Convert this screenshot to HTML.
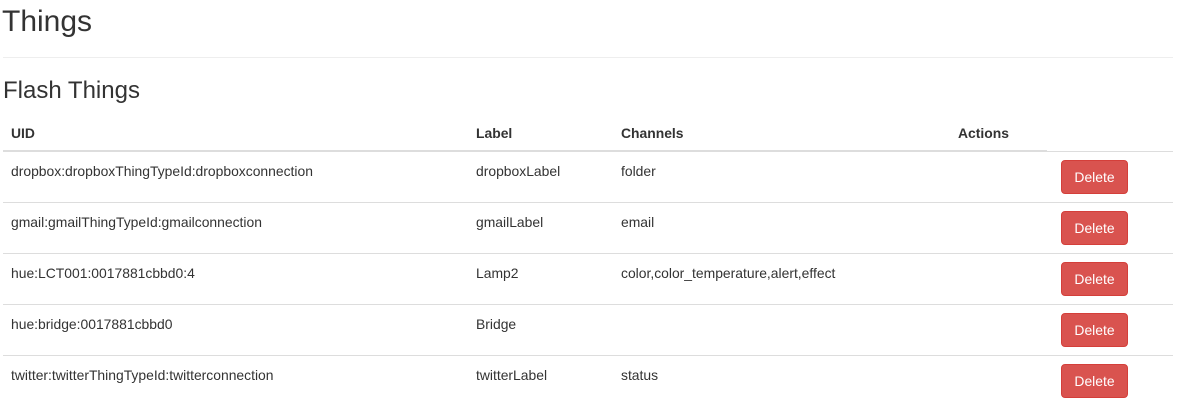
<!DOCTYPE html>
<html><head><style>
body{margin:0;font-family:"Liberation Sans",Arial,sans-serif;color:#333;background:#fff;width:1177px;height:411px;overflow:hidden;position:relative}
h1{position:absolute;left:2px;top:4px;margin:0;font-size:30px;font-weight:400;line-height:36px}
.hr{position:absolute;left:3px;width:1170px;top:57px;height:1px;background:#eee}
h3{position:absolute;left:3px;top:77px;margin:0;font-size:24px;font-weight:400;line-height:28px}
table{position:absolute;left:3px;top:115px;border-collapse:collapse;font-size:13.9px;width:1170px}
th{text-align:left;font-weight:bold;padding:0 8px;height:35px;border-bottom:2px solid #ddd;vertical-align:middle}
td{padding:0 8px;border-top:1px solid #ddd;vertical-align:top;line-height:18px;box-sizing:border-box;height:51px}
td.t{padding-top:10px}
td.b{padding:8px 0 0 14px}
.btn{display:inline-block;width:67px;height:34px;box-sizing:border-box;background:#d9534f;border:1px solid #d43f3a;border-radius:4px;color:#fff;font-size:13.9px;line-height:32px;text-align:center}
</style></head><body>
<h1>Things</h1>
<div class="hr"></div>
<h3>Flash Things</h3>
<table>
<tr><th style="width:449px">UID</th><th style="width:129px">Label</th><th style="width:321px">Channels</th><th style="width:81px">Actions</th><th style="border-bottom:1px solid #ddd"></th></tr>
<tr><td class="t">dropbox:dropboxThingTypeId:dropboxconnection</td><td class="t">dropboxLabel</td><td class="t">folder</td><td class="t"></td><td class="b"><span class="btn">Delete</span></td></tr>
<tr><td class="t">gmail:gmailThingTypeId:gmailconnection</td><td class="t">gmailLabel</td><td class="t">email</td><td class="t"></td><td class="b"><span class="btn">Delete</span></td></tr>
<tr><td class="t">hue:LCT001:0017881cbbd0:4</td><td class="t">Lamp2</td><td class="t">color,color_temperature,alert,effect</td><td class="t"></td><td class="b"><span class="btn">Delete</span></td></tr>
<tr><td class="t">hue:bridge:0017881cbbd0</td><td class="t">Bridge</td><td class="t"></td><td class="t"></td><td class="b"><span class="btn">Delete</span></td></tr>
<tr><td class="t">twitter:twitterThingTypeId:twitterconnection</td><td class="t">twitterLabel</td><td class="t">status</td><td class="t"></td><td class="b"><span class="btn">Delete</span></td></tr>
</table>
</body></html>
